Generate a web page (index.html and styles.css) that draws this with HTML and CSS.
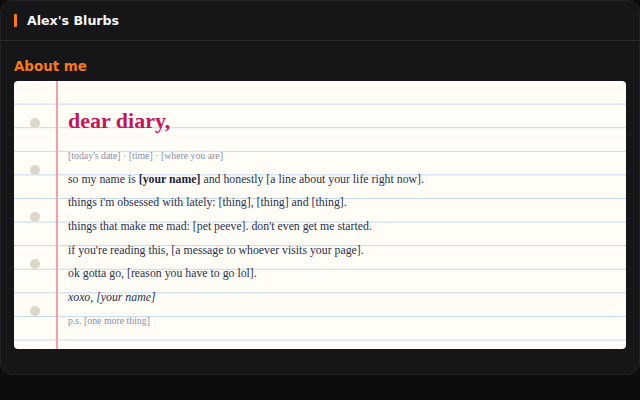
FILE: index.html
```html
<!DOCTYPE html>
<html>
<head>
<meta charset="utf-8">
<link rel="stylesheet" href="styles.css">
</head>
<body>
<div class="card">
  <header class="top">
    <span class="bar"></span>
    <h1 class="title">Alex's Blurbs</h1>
  </header>
  <section class="about">
    <h2 class="heading">About me</h2>
    <div class="paper">
      <div class="holes">
        <span class="hole"></span>
        <span class="hole"></span>
        <span class="hole"></span>
        <span class="hole"></span>
        <span class="hole"></span>
      </div>
      <div class="margin-line"></div>
      <div class="writing">
        <h3 class="dear">dear diary,</h3>
        <p class="meta">[today's date] · [time] · [where you are]</p>
        <p class="line">so my name is <b>[your name]</b> and honestly [a line about your life right now].</p>
        <p class="line">things i'm obsessed with lately: [thing], [thing] and [thing].</p>
        <p class="line">things that make me mad: [pet peeve]. don't even get me started.</p>
        <p class="line">if you're reading this, [a message to whoever visits your page].</p>
        <p class="line">ok gotta go, [reason you have to go lol].</p>
        <p class="line sign">xoxo, [your name]</p>
        <p class="meta">p.s. [one more thing]</p>
      </div>
    </div>
  </section>
</div>
</body>
</html>
```

FILE: styles.css
```css
html, body {
  margin: 0;
  padding: 0;
  background: #0d0d0e;
}
body {
  width: 640px;
  height: 400px;
  overflow: hidden;
}
.card {
  box-sizing: border-box;
  width: 640px;
  background: #161618;
  border: 1px solid #232326;
  border-radius: 12px;
}
.top {
  display: flex;
  align-items: center;
  gap: 10px;
  height: 39px;
  padding: 0 13px;
  border-bottom: 1px solid #29292c;
}
.bar {
  width: 3px;
  height: 13px;
  background: #f97a1c;
  border-radius: 1px;
}
.title {
  margin: 0;
  font-family: "DejaVu Sans", sans-serif;
  font-weight: bold;
  font-size: 12.6px;
  color: #f6f6f8;
}
.about {
  padding: 18px 13px 25px;
}
.heading {
  margin: 0 0 7px;
  font-family: "DejaVu Sans", sans-serif;
  font-weight: bold;
  font-size: 13.4px;
  line-height: 15px;
  color: #f97a1c;
}
.paper {
  position: relative;
  display: flex;
  height: 268px;
  box-sizing: border-box;
  border-radius: 4px;
  background-color: #fffdf6;
  background-image: linear-gradient(to bottom, transparent 22.6px, #c6d7ef 22.6px, #c6d7ef 23.6px);
  background-size: 100% 23.6px;
  overflow: hidden;
}
.holes {
  display: flex;
  flex-direction: column;
  align-items: center;
  gap: 37px;
  width: 42px;
  padding-top: 37px;
}
.hole {
  display: block;
  width: 10px;
  height: 10px;
  border-radius: 50%;
  background: #dcd8c8;
}
.margin-line {
  width: 2px;
  background: #f1a0ad;
}
.writing {
  padding: 16px 0 0 10px;
  font-family: "Liberation Serif", "Times New Roman", serif;
  color: #283050;
}
.dear {
  margin: 0;
  font-size: 22px;
  line-height: 47.2px;
  font-weight: bold;
  color: #c2185b;
}
.meta {
  margin: 0;
  font-size: 9.8px;
  line-height: 23.6px;
  color: #8890ad;
}
.line {
  margin: 0;
  font-size: 11.8px;
  line-height: 23.6px;
  white-space: nowrap;
}
.line b {
  color: #1c2242;
}
.sign {
  font-style: italic;
}
```
